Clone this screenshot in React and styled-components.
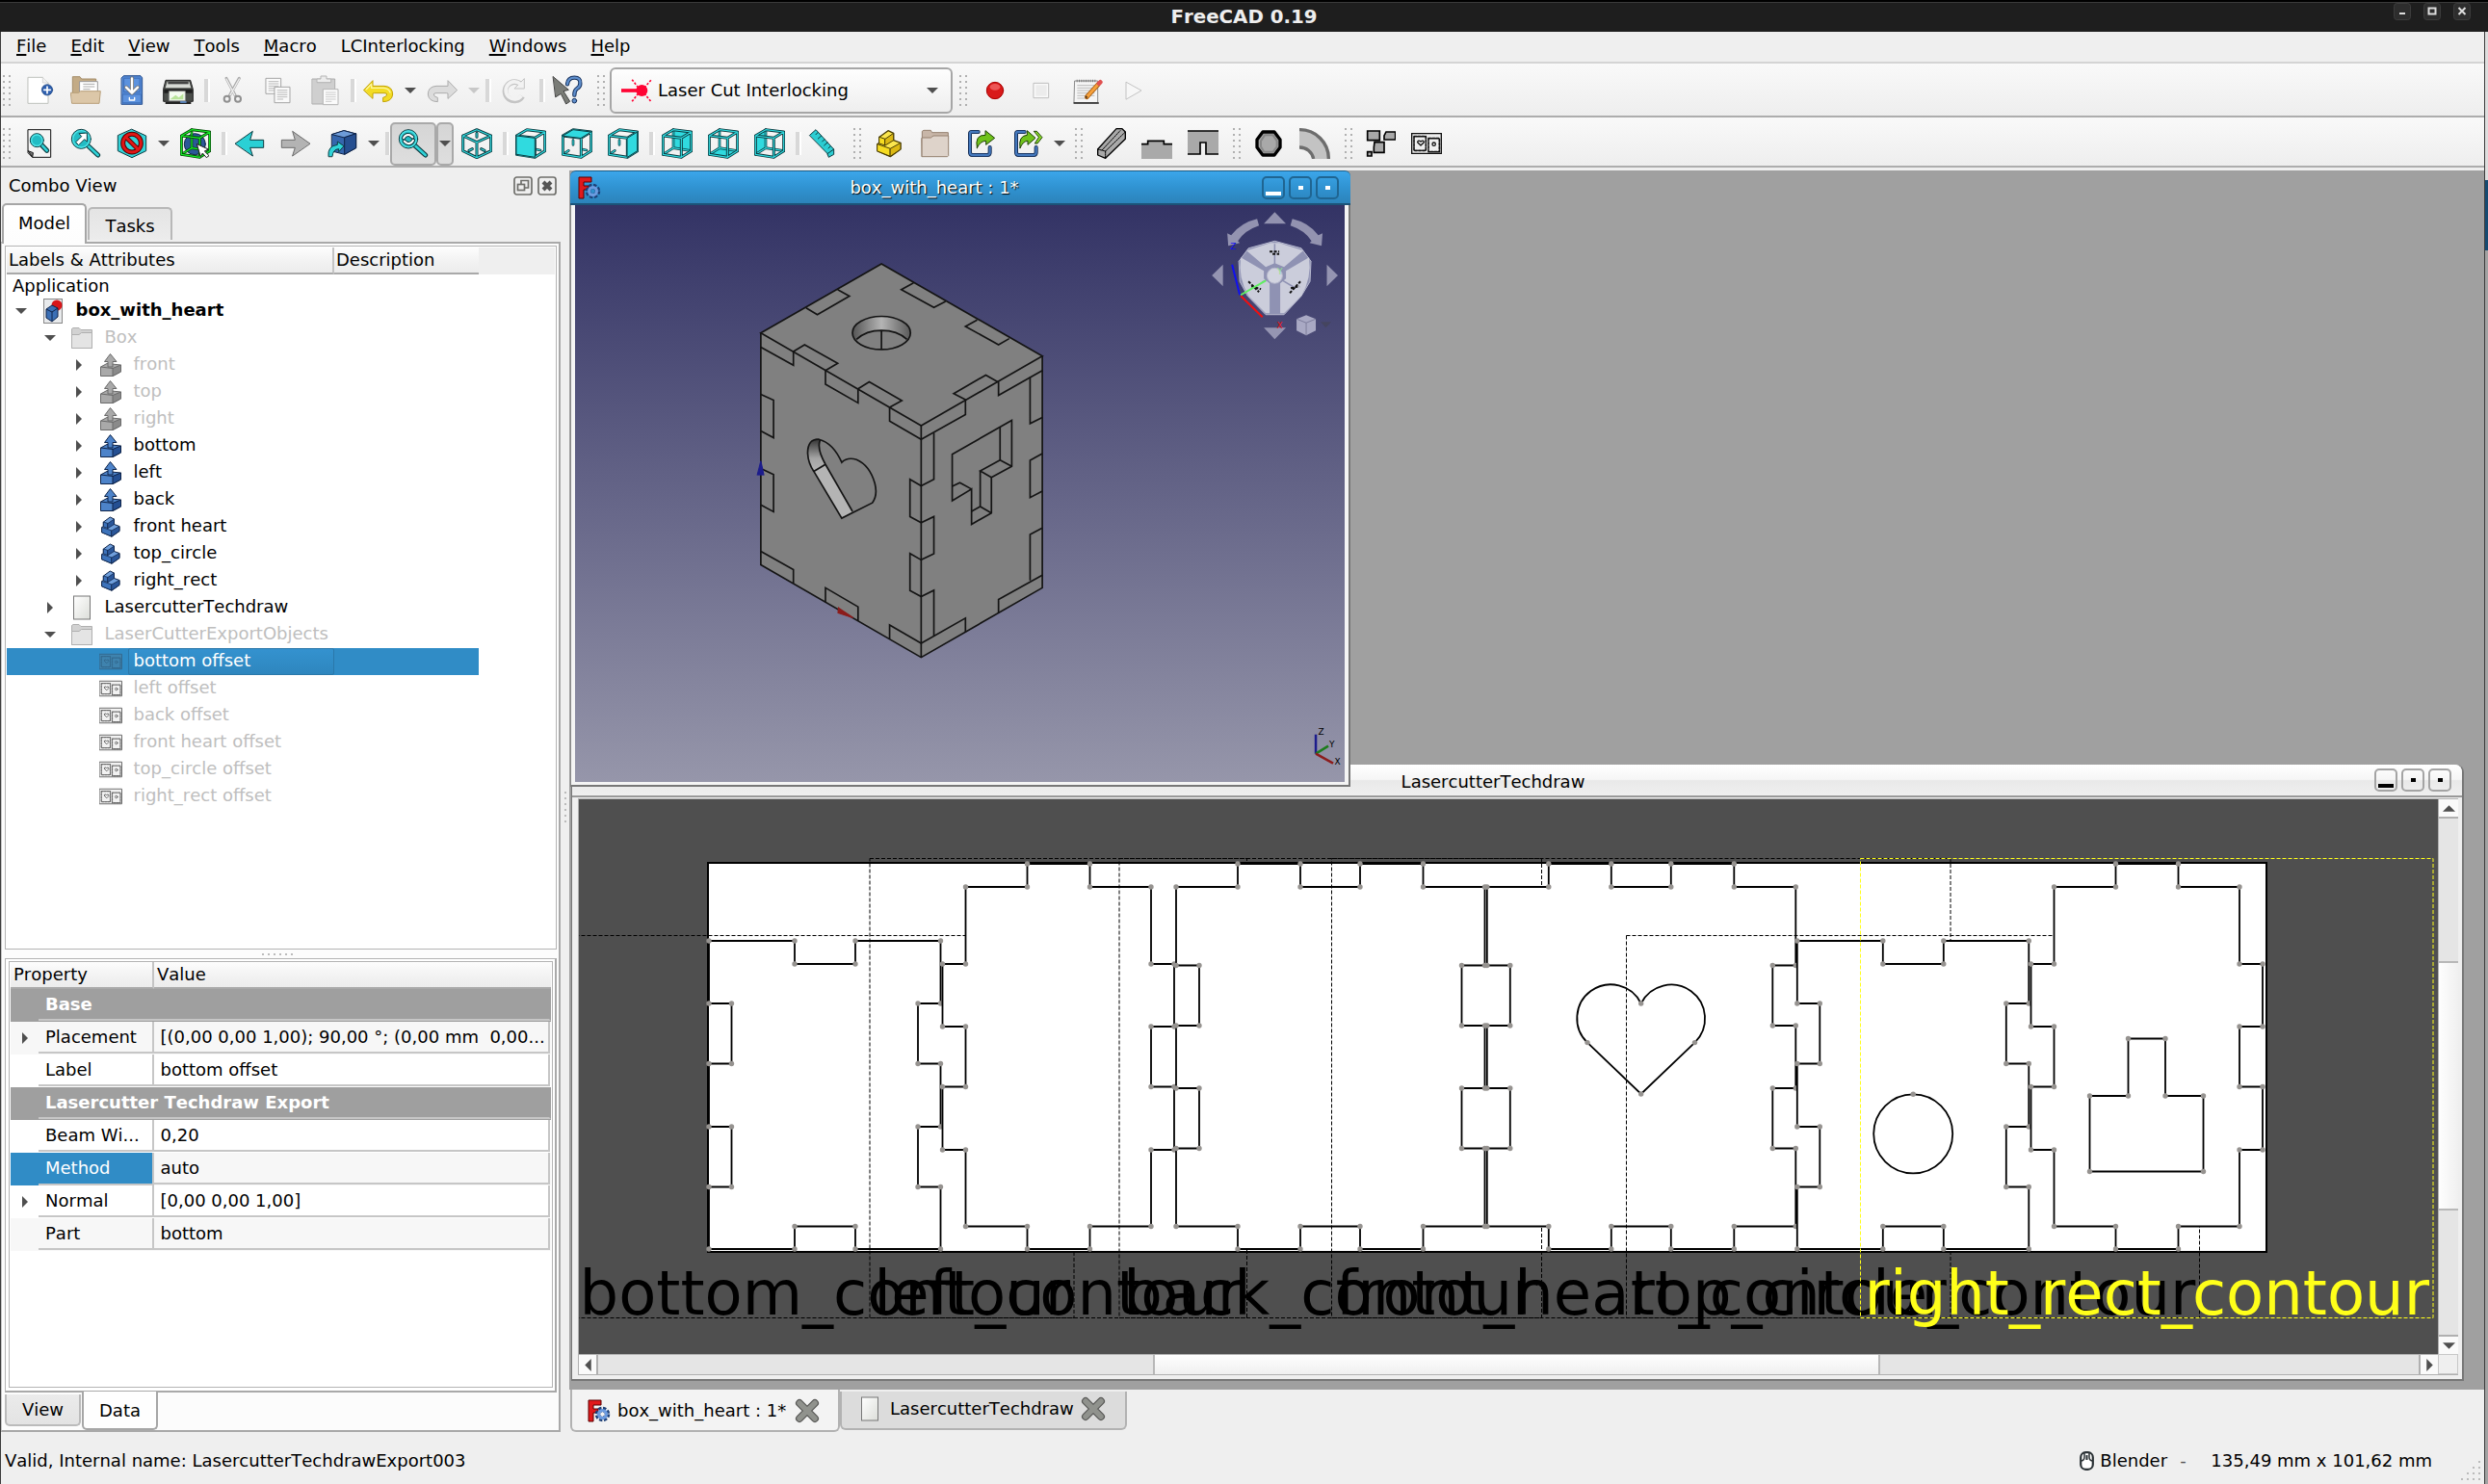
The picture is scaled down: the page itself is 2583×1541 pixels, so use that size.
import React from 'react';
import styled, { createGlobalStyle, css } from 'styled-components';

const GlobalStyle = createGlobalStyle`
  * { box-sizing: border-box; }
  html, body { margin: 0; padding: 0; }
  body {
    width: 2583px; height: 1541px; overflow: hidden;
    font-family: "DejaVu Sans", sans-serif; font-size: 18px; line-height: 1.2;
    color: #000; background: #efefef; font-kerning: none;
  }
  svg { display: block; flex: none; }
`;

/* ---------- shell ---------- */
const Shell = styled.div`
  width: 2583px; height: 1541px; display: flex; flex-direction: column; background: #efefef;
`;
const TitleBar = styled.header`
  height: 33px; flex: none; position: relative; display: flex; align-items: center; justify-content: center;
  background: #1e1e1e; border-top: 2px solid #000; box-shadow: inset 0 1px 0 #3a3a3a;
  color: #eee; font-weight: bold; font-size: 19.8px;
`;
const TitleText = styled.span`margin-top: 0;`;
const TitleButtons = styled.div`
  position: absolute; right: 18px; top: 1px; display: flex; gap: 13px;
`;
const Frame = styled.div`
  flex: 1; min-height: 0; display: flex; border-left: 1px solid #3c3c3c;
`;
const Content = styled.div`width: 2578px; flex: none; display: flex; flex-direction: column;`;
const EdgeStrip = styled.div`
  flex: 1; display: flex; flex-direction: column; border-left: 1px solid #3c3c3c; background: #a2a2a2;
`;
const EdgeBlock = styled.div`
  height: ${p => p.$h}px; background: ${p => p.$c};
`;

const MenuBar = styled.nav`
  height: 33px; flex: none; display: flex; padding: 0 0 2px 3.5px; border-bottom: 2px solid #d4d4d4; align-items: center;
`;
const MenuItem = styled.span`
  padding: 0 12.5px; 
  &::first-letter {
    text-decoration: ${p => (p.$mnemonic ? 'underline' : 'none')};
    text-decoration-thickness: 2px; text-underline-offset: 2px;
  }
  display: block;
`;
const ToolRow = styled.div`
  height: ${p => p.$h}px; flex: none; display: flex; align-items: center; padding-top: ${p => p.$top}px;
  background: linear-gradient(#f9f9f9, #eeeeee); border-bottom: 2px solid #adadad;
`;
const ToolGrip = styled.span`
  width: ${p => p.$w || 20}px; height: 34px; flex: none; padding-left: ${p => (p.$w ? 1 : 6)}px;
  &::before {
    content: ""; display: block; width: 10px; height: 34px;
    background: radial-gradient(circle at 2px 2px, #b0b0b0 1.2px, transparent 1.5px) 0 0 / 6px 6px;
  }
`;
const ToolButton = styled.span`
  width: 48px; height: 45px; flex: none; display: flex; align-items: center; justify-content: center;
  ${p => p.$active && css`
    background: linear-gradient(#d5d5d5, #dedede); border: 2px solid #a9a9a9; border-radius: 5px;
  `}
`;
const DropButton = styled.span`
  width: 18px; height: 45px; flex: none; display: flex; align-items: center; justify-content: center;
  ${p => p.$active && css`
    background: linear-gradient(#d5d5d5, #dedede); border: 2px solid #a9a9a9; border-radius: 5px;
  `}
`;
const ToolSep = styled.span`
  width: 8px; height: 24px; flex: none; 
  &::before { content: ""; display: block; margin-left: 3px; width: 4px; height: 24px; background: #d8d8d8; border-right: 2px solid #fff; }
`;
const Combo = styled.div`
  width: 356px; height: 48px; flex: none; display: flex; align-items: center; padding: 0 13px 0 10px;
  border: 2px solid #a6a6a6; border-radius: 6px; background: linear-gradient(#fefefe, #eeeeee);
`;
const ComboText = styled.span`flex: 1; padding-left: 6px;`;

/* ---------- dock ---------- */
const Main = styled.div`flex: 1; min-height: 0; display: flex;`;
const Dock = styled.aside`width: 581px; flex: none; display: flex; flex-direction: column; height: 1313px;`;
const DockTitle = styled.div`
  height: 37px; flex: none; display: flex; align-items: center; padding: 1px 4px 0 8px; gap: 5px;
`;
const DockName = styled.span`flex: 1;`;
const TabsTop = styled.div`height: 40px; flex: none; display: flex; align-items: flex-end; gap: 1px; padding-left: 1px;`;
const TopTab = styled.div`
  display: flex; align-items: center; justify-content: center;
  border: 2px solid ${p => (p.$on ? '#a6a6a6' : '#b8b8b8')}; border-bottom: 0; border-radius: 5px 5px 0 0;
  width: 88px; height: ${p => (p.$on ? 42 : 34)}px; 
  margin-bottom: ${p => (p.$on ? -2 : 2)}px; padding-top: ${p => (p.$on ? 0 : 3)}px; padding-bottom: ${p => (p.$on ? 2 : 0)}px;
  background: ${p => (p.$on ? 'linear-gradient(#fff, #fdfdfd)' : 'linear-gradient(#e4e4e4, #ececec)')};
  position: relative;
`;
const Pane = styled.div`
  flex: 1; min-height: 0; display: flex; flex-direction: column; background: #fcfcfc;
  border: 2px solid #a9a9a9; border-left: 1px solid #c4c4c4; padding: 2px 2px 0 3px;
`;
const TreeFrame = styled.div`
  height: 731px; flex: none; border: 1px solid #b4b4b4; background: #fff; padding: 1px;
`;
const HeaderRow = styled.div`display: flex; height: ${p => p.$h}px; background: #efefef;`;
const HeaderCell = styled.div`
  width: ${p => p.$w}px; flex: ${p => (p.$grow ? 1 : 'none')}; display: flex; align-items: center; padding-left: ${p => p.$pad}px;
  background: linear-gradient(#fdfdfd, #f4f4f4 45%, #ececec); border-bottom: 2px solid #a9a9a9;
  border-right: ${p => (p.$last ? 0 : 2)}px solid #c4c4c4;
`;
const AppRow = styled.div`height: 24px; display: flex; align-items: center; padding-left: 6px;`;
const TreeRow = styled.div`
  height: 28px; width: 490px; display: flex; align-items: center; padding-left: ${p => p.$level * 30}px;
  color: ${p => (p.$sel ? '#fff' : p.$dim ? '#bebebe' : '#000')};
  font-weight: ${p => (p.$bold ? 'bold' : 'normal')};
  background: ${p => (p.$sel ? '#308cc6' : 'transparent')};
`;
const Expander = styled.span`
  width: 30px; flex: none; display: flex; justify-content: center; margin-right: 6px;
`;
const TreeLabel = styled.span`
  margin-left: 6px; padding-left: 5.5px; height: 28px; line-height: 26px; white-space: nowrap;
  ${p => p.$sel && css`width: 214px; border: 1px solid #2a78aa; border-radius: 2px; line-height: 24px; padding-left: 4.5px; background: linear-gradient(#3492cf, #2e86be);`}
`;
const DotBar = styled.div`
  height: 9px; flex: none; display: flex; justify-content: center; align-items: center; gap: 4px; padding-right: 8px;
`;
const Dot = styled.i`width: 2px; height: 2px; background: #bbb;`;
const PropOuter = styled.div`
  height: 451px; flex: none; border: 1px solid #b4b4b4; border-right: 2px solid #a9a9a9; border-bottom: 2px solid #a9a9a9;
  background: #fff; padding: 2px 2px 3px 3px;
`;
const PropInner = styled.div`height: 100%; border: 1px solid #b4b4b4; padding: 0 1px 1px;`;
const PropRow = styled.div`
  height: 34px; display: flex; position: relative;
  background: ${p => (p.$group ? '#9f9f9f' : p.$alt ? '#f7f7f7' : '#fff')};
  color: ${p => (p.$group ? '#fff' : '#000')}; font-weight: ${p => (p.$group ? 'bold' : 'normal')};
`;
const PropGutter = styled.div`
  width: 29px; flex: none; display: flex; align-items: center; justify-content: center;
  background: ${p => (p.$sel ? '#308cc6' : 'transparent')};
`;
const PropName = styled.div`
  width: ${p => (p.$wide ? 'auto' : '120px')}; flex: ${p => (p.$wide ? 1 : 'none')}; 
  padding-left: 7px; line-height: 31px; white-space: pre; height: ${p => (p.$sel ? 34 : 33)}px;
  border-bottom: 2px solid #c6c6c6; border-right: 2px solid ${p => (p.$wide ? '#9f9f9f' : '#c6c6c6')};
  color: ${p => (p.$sel ? '#fff' : 'inherit')}; background: ${p => (p.$sel ? '#308cc6' : 'transparent')};
`;
const PropValue = styled.div`
  flex: 1; padding-left: 6.5px; line-height: 31px; white-space: pre; overflow: hidden; height: 33px;
  border-bottom: 2px solid #c6c6c6; border-right: 2px solid #c6c6c6; margin-right: 1px;
`;
const TabsBottom = styled.div`display: flex; align-items: flex-start; gap: 1px;`;
const BottomTab = styled.div`
  display: flex; align-items: center; justify-content: center; position: relative;
  border: 2px solid ${p => (p.$on ? '#a6a6a6' : '#bbb')}; border-top: 0; border-radius: 0 0 5px 5px;
  width: 79px; height: ${p => (p.$on ? 40 : 33)}px; margin-top: ${p => (p.$on ? -1 : 2)}px; padding-top: ${p => (p.$on ? 1 : 0)}px;
  background: ${p => (p.$on ? '#fefefe' : 'linear-gradient(#ebebeb, #e3e3e3)')};
`;
const Splitter = styled.div`
  width: 9px; flex: none; height: 1313px; display: flex; flex-direction: column; justify-content: center; align-items: center; gap: 4px; padding-top: 14px;
`;

/* ---------- mdi ---------- */
const Center = styled.div`flex: 1; min-width: 0; display: flex; flex-direction: column; padding-top: 3px;`;
const MdiArea = styled.div`height: 1266px; flex: none; position: relative; background: #a0a0a0; overflow: hidden;`;
const BoxWindow = styled.section`
  position: absolute; left: 1px; top: 0; width: 810px; height: 640px; display: flex; flex-direction: column;
`;
const BoxTitle = styled.div`
  height: 36px; flex: none; display: flex; align-items: center; padding: 0 12px 0 8px; 
  background: linear-gradient(#3ba6ea, #3093d2 50%, #2c83ba); border-top: 1px solid #1d5c85; border-bottom: 2px solid #1b5378;
  border-radius: 6px 6px 0 0; color: #fff; text-shadow: 1px 1px 1px #000;
`;
const WinName = styled.span`flex: 1; text-align: center; padding-left: ${p => p.$shift || 0}px; padding-top: ${p => p.$drop || 0}px;`;
const WinButtons = styled.div`display: flex; gap: 4px;`;
const WinButton = styled.span`
  width: 24px; height: 24px; border-radius: 5px; display: flex; justify-content: center; align-items: ${p => (p.$min ? 'flex-end' : 'center')};
  border: 2px solid ${p => (p.$blue ? '#1f6592' : '#a4a4a4')}; padding-bottom: ${p => (p.$min ? 2 : 0)}px;
  &::before { content: ""; width: ${p => (p.$min ? 16 : 5)}px; height: 4px; background: ${p => (p.$blue ? '#fff' : '#000')}; }
`;
const BoxBody = styled.div`
  flex: 1; display: flex; background: #f4f4f4; padding: 0 4px 3px 4px;
  border-left: 1px solid #888; border-right: 2px solid #777; border-bottom: 2px solid #777;
`;
const Viewport = styled.div`
  flex: 1; position: relative; background: linear-gradient(#333365, #9696aa);
`;
const SceneSvg = styled.svg`position: absolute; left: 0; top: 0; width: 100%; height: 100%;`;

const DrawWindow = styled.section`
  position: absolute; left: 2px; top: 617px; width: 1965px; height: 640px; display: flex; flex-direction: column;
  background: #efefef; border-left: 1px solid #777; border-right: 2px solid #777; border-bottom: 2px solid #777; border-radius: 0 8px 0 0;
`;
const DrawTitle = styled.div`
  height: 34px; flex: none; display: flex; align-items: center; padding: 0 11px 0 0;
  background: linear-gradient(#fff, #f6f6f6 48%, #e9e9e9 52%, #efefef); border-bottom: 2px solid #999; border-radius: 0 8px 0 0;
`;
const DrawBody = styled.div`
  margin: 1px 4px 4px 6px; flex: 1; display: grid; grid-template: 576px 21px / 1930px 21px; border: 1px solid #b0b0b0;
`;
const Canvas = styled.div`background: #4f4f4f; overflow: hidden;`;
const VScroll = styled.div`display: flex; flex-direction: column; background: #e5e5e5; border-left: 1px solid #b0b0b0;`;
const HScroll = styled.div`display: flex; background: #e5e5e5; border-top: 1px solid #b0b0b0;`;
const ScrollArrow = styled.span`
  flex: none; width: 20px; height: 20px; display: flex; align-items: center; justify-content: center; background: #fafafa;
  border: 0 solid #b0b0b0; 
  border-width: ${p => p.$edge};
`;
const ScrollGap = styled.span`flex: none; ${p => (p.$v ? 'height' : 'width')}: ${p => p.$s}px;`;
const ScrollThumb = styled.span`
  flex: none; background: ${p => (p.$v ? 'linear-gradient(90deg, #fefefe, #f0f0f0)' : 'linear-gradient(#fefefe, #f0f0f0)')};
  ${p => (p.$v ? css`height: ${p.$s}px; border: 2px solid #b8b8b8; border-width: 2px 0;` : css`width: ${p.$s}px; border: 2px solid #b8b8b8; border-width: 0 2px;`)}
`;
const Corner = styled.div`background: #efefef; border: 1px solid #c8c8c8;`;

const DocTabs = styled.div`height: 44px; flex: none; display: flex; align-items: flex-start; padding-left: 1px;`;
const DocTab = styled.div`
  display: flex; align-items: center; 
  width: ${p => p.$w}px; height: ${p => (p.$on ? 44 : 40)}px; margin-top: ${p => (p.$on ? 0 : 2)}px;
  padding: ${p => (p.$on ? '2px 19px 0 16px' : '0 20px 2px 17px')};
  border: 2px solid #b2b2b2; border-top: 0; border-radius: 0 0 6px 6px;
  background: ${p => (p.$on ? '#f3f3f3' : '#dcdcdc')};
`;
const DocName = styled.span`flex: 1; padding-left: ${p => p.$pad}px; white-space: nowrap;`;

const StatusBar = styled.footer`
  height: 52px; flex: none; display: flex; align-items: center; padding: 3px 0 0 4px; position: relative;
`;
const StatusText = styled.span`flex: 1;`;
const StatusRight = styled.div`display: flex; align-items: center; padding-right: 54px;`;
const NavStyle = styled.span`margin-left: 6px; width: 83px;`;
const Dash = styled.span`width: 32px; color: #555;`;
const SizeGrip = styled.svg`position: absolute; right: 2px; bottom: 2px;`;

/* ---------- icon pieces ---------- */
const K = '#0b3b40';
const Ico = ({ children, s = 32 }) => (
  <svg width={s} height={s} viewBox="0 0 96 96" strokeLinejoin="round" strokeLinecap="round" fill="none">{children}</svg>
);
const Caret = ({ c = '#4f4f4f', d = 'down', s = 12 }) => {
  const pts = { down: '0,3 12,3 6,9', up: '0,9 12,9 6,3', right: '3,0 9,6 3,12', left: '9,0 3,6 9,12' }[d];
  return <svg width={s} height={s} viewBox="0 0 12 12"><polygon points={pts} fill={c} /></svg>;
};
const Lines = ({ x, y, w, n, gap = 8, c = '#aaa' }) => (
  <path d={Array.from({ length: n }, (_, i) => `M${x} ${y + i * gap}h${i === n - 1 ? w * 0.6 : w}`).join('')} stroke={c} strokeWidth="3" strokeLinecap="butt" />
);

const NewIcon = () => <Ico><path d="M13 7H58L75 24V88H13Z" fill="#fff" stroke="#bfc2bd" strokeWidth="3" /><path d="M58 7V24H75" fill="#f2f2f2" stroke="#c9c9c9" strokeWidth="2" /><circle cx="72" cy="46" r="17" fill="#2e5fae" stroke="#20457f" strokeWidth="2" /><path d="M72 36V56M62 46H82" stroke="#fff" strokeWidth="5" /></Ico>;
const OpenIcon = () => <Ico><path d="M7 58V5H30L35 12H80V58Z" fill="#c3ab86" stroke="#a48d68" strokeWidth="3" /><path d="M30 20H85V62H30Z" fill="#fff" stroke="#999" strokeWidth="3" /><Lines x={40} y={28} w={36} n={3} /><path d="M2 55H26L32 50H94L90 88H6Z" fill="#dcc7a8" stroke="#b89f79" strokeWidth="3" /></Ico>;
const SaveIcon = () => <Ico><path d="M16 8L22 2H75L80 8V91H16Z" fill="#5085d1" stroke="#274f8f" strokeWidth="3" /><path d="M20 60H76V86H20ZM24 10H72V52H24Z" fill="#5c92de" stroke="#3565ad" strokeWidth="2" /><path d="M40 70V78H56V70" stroke="#fff" strokeWidth="4" /><path d="M48 10V48M30 38L48 56L66 38" stroke="#777" strokeWidth="12" /><path d="M48 10V48M30 38L48 56L66 38" stroke="#fff" strokeWidth="7" /></Ico>;
const PrintIcon = () => <Ico><path d="M10 16H86L94 44V82H2V44Z" fill="#4a4d4a" stroke="#222" strokeWidth="3" /><path d="M14 20H82L88 40H8Z" fill="#d7dad5" /><path d="M16 20H80V28H16Z" fill="#444" /><path d="M4 44H92V56H4Z" fill="#1d1d1d" /><path d="M20 50H70V80H20Z" fill="#f4fbef" stroke="#999" strokeWidth="2" /><path d="M24 74L40 62L50 70L64 58V76H24Z" fill="#b9e39a" /><path d="M8 84H88V90H8Z" fill="#222" /><path d="M56 84H72" stroke="#69d" strokeWidth="5" /></Ico>;
const CutIcon = () => <Ico><path d="M30 10L58 64M70 10L40 64" stroke="#a9a9a9" strokeWidth="9" /><path d="M30 12L56 62M70 12L42 62" stroke="#eee" strokeWidth="4" /><circle cx="32" cy="74" r="9" stroke="#8f8f8f" strokeWidth="6" /><circle cx="66" cy="74" r="9" stroke="#8f8f8f" strokeWidth="6" /></Ico>;
const CopyIcon = () => <Ico><path d="M10 10H56V58H10Z" fill="#fafafa" stroke="#a5a5a5" strokeWidth="3" /><Lines x={17} y={20} w={32} n={5} gap={7} c="#bbb" /><path d="M37 37H84V86H37Z" fill="#fafafa" stroke="#a5a5a5" strokeWidth="3" /><Lines x={44} y={47} w={32} n={5} gap={7} c="#bbb" /></Ico>;
const PasteIcon = () => <Ico><path d="M10 12H80V90H10Z" fill="#cfcfcf" stroke="#adadad" strokeWidth="3" /><path d="M24 22V12H36V3H54V12H68V22Z" fill="#ececec" stroke="#b5b5b5" strokeWidth="3" /><path d="M44 44H90V92H44Z" fill="#fbfbfb" stroke="#b5b5b5" strokeWidth="3" /><Lines x={51} y={54} w={32} n={5} gap={7} c="#ccc" /></Ico>;
const arrowD = 'M2 46L30 17V34H66Q92 36 92 60Q90 82 62 83V70Q74 68 74 60Q74 56 66 56H34L30 57V72Z';
const UndoIcon = () => <Ico><path d={arrowD} fill="#f3dc24" stroke="#c2a203" strokeWidth="3" /><path d="M10 44L26 28V40H64Q80 41 84 54" stroke="#fdf6a0" strokeWidth="4" /></Ico>;
const RedoIcon = () => <Ico><path d={arrowD} transform="matrix(-1 0 0 1 96 0)" fill="#dcdcdc" stroke="#ababab" strokeWidth="3" /></Ico>;
const RefreshIcon = () => <Ico><path d="M72 30A29 29 0 1 0 76 66" stroke="#c4c4c4" strokeWidth="17" strokeLinecap="butt" /><path d="M82 12V42H52Z" fill="#f2f2f2" stroke="#c4c4c4" strokeWidth="3" /><path d="M70 28A27 27 0 1 0 73 64" stroke="#f2f2f2" strokeWidth="11" strokeLinecap="butt" /></Ico>;
const HelpIcon = () => <Ico><path d="M48 28Q50 8 70 8Q90 8 88 26Q88 36 78 42Q70 47 70 62" stroke="#16305b" strokeWidth="13" /><path d="M48 28Q50 8 70 8Q90 8 88 26Q88 36 78 42Q70 47 70 62" stroke="#5f8fcd" strokeWidth="7" /><circle cx="70" cy="80" r="7" fill="#5f8fcd" stroke="#16305b" strokeWidth="3" /><path d="M4 5L52 46L36 50L56 82L44 90L28 58L12 68Z" fill="#7a7c77" stroke="#444" strokeWidth="3" /></Ico>;
const LaserIcon = () => <Ico><path d="M0 48H50" stroke="#ff0434" strokeWidth="11" strokeLinecap="butt" /><circle cx="64" cy="48" r="18" fill="#ff0434" /><path d="M64 48L94 14M64 48L94 84M60 48L32 12M60 48L32 84" stroke="#ff0434" strokeWidth="5" strokeDasharray="7 5" strokeLinecap="butt" /></Ico>;
const RecordIcon = () => <Ico><circle cx="48" cy="48" r="26" fill="#d91a1a" stroke="#a80000" strokeWidth="3" /><ellipse cx="48" cy="37" rx="16" ry="10" fill="#f37070" opacity="0.7" /></Ico>;
const StopIcon = () => <Ico><path d="M25 25H71V71H25Z" fill="#fafafa" stroke="#bfbfbf" strokeWidth="3" strokeLinejoin="miter" /><path d="M31 31H65V65H31Z" fill="#ececec" /></Ico>;
const EditIcon = () => <Ico><path d="M9 18H80V86H7Z" fill="#f5f5f5" stroke="#8c8c8c" strokeWidth="3" /><path d="M6 87H82" stroke="#222" strokeWidth="4" /><path d="M14 18H76" stroke="#777" strokeWidth="8" strokeDasharray="3 4" strokeLinecap="butt" /><Lines x={16} y={32} w={54} n={6} gap={8} c="#bbb" /><path d="M46 68L82 28" stroke="#a85d10" strokeWidth="14" /><path d="M48 66L80 30" stroke="#f6a13c" strokeWidth="9" /><path d="M84 26L88 22" stroke="#e05050" strokeWidth="14" /><path d="M42 72L48 68L44 64Z" fill="#222" /></Ico>;
const PlayIcon = () => <Ico><path d="M25 22L72 48L25 75Z" fill="#f7f7f7" stroke="#c4c4c4" strokeWidth="3" /></Ico>;

const Glass = ({ cx, cy, r, hx, hy }) => {
  const a = r * 0.72;
  return <><path d={`M${cx + a} ${cy + a}L${hx} ${hy}`} stroke={K} strokeWidth="15" /><path d={`M${cx + a} ${cy + a}L${hx} ${hy}`} stroke="#2fd3d8" strokeWidth="8" /><circle cx={cx} cy={cy} r={r} fill="#22bcc4" stroke={K} strokeWidth="3" /><circle cx={cx} cy={cy} r={r - 4} stroke="#4fe3e6" strokeWidth="4" /></>;
};
const FitAllIcon = () => <Ico><path d="M13 5H83V91H26L13 78Z" fill="#f4f4f4" stroke="#111" strokeWidth="3" /><path d="M13 72L26 91L28 78Z" fill="#777" stroke="#111" strokeWidth="3" /><Glass cx={40} cy={38} r={21} hx={71} hy={70} /></Ico>;
const FitSelIcon = () => <Ico><Glass cx={34} cy={34} r={30} hx={86} hy={84} /><path d="M52 16V42L44 35L26 53L17 44L35 26L28 18Z" fill="#fff" stroke={K} strokeWidth="3" /></Ico>;
const DrawStyleIcon = () => <Ico><path d="M48 4L92 24V71L48 92L4 71V24Z" fill="#33d3d8" stroke={K} strokeWidth="3" /><circle cx="48" cy="47" r="28" stroke="#4c0000" strokeWidth="15" /><path d="M28 27L68 67" stroke="#4c0000" strokeWidth="14" /><circle cx="48" cy="47" r="28" stroke="#df1616" strokeWidth="9" /><path d="M28 27L68 67" stroke="#df1616" strokeWidth="9" /></Ico>;
const Cube = ({ c, k, face }) => {
  const F = { front: '4,24 61,31 61,91 4,82', top: '4,24 36,5 92,12 61,31', right: '61,31 92,12 92,71 61,91', back: '36,5 92,12 92,71 36,62', bottom: '4,82 36,62 92,71 61,91', left: '4,24 36,5 36,62 4,82' };
  const wire = 'M4 24L61 31V91L4 82ZM4 24L36 5L92 12L61 31M92 12V71L61 91';
  const hidden = 'M36 5V62L92 71M36 62L4 82';
  const solid = face === 'front' || face === 'top' || face === 'right';
  const short = 'M36 38V52M22 70L12 77M64 66L78 69';
  return <>
    {face && <polygon points={F[face]} fill={c} />}
    <path d={solid ? short : hidden} stroke={k} strokeWidth="8" /><path d={solid ? short : hidden} stroke={c} strokeWidth="3.5" />
    <path d={wire} stroke={k} strokeWidth="9" /><path d={wire} stroke={c} strokeWidth="3.5" />
    {face && solid && <polygon points={F[face]} fill={c} stroke={k} strokeWidth="3" />}
  </>;
};
const CubeIcon = ({ face }) => <Ico><Cube c="#30dadf" k={K} face={face} /></Ico>;
const BoundIcon = () => <Ico><circle cx="46" cy="50" r="33" fill="#2c5798" stroke="#10254a" strokeWidth="3" /><Cube c="#17f028" k="#064a08" /><path d="M53 50L88 66L76 72L90 86L82 92L70 78L64 88Z" fill="#fff" stroke="#222" strokeWidth="3" /></Ico>;
const BackIcon = () => <Ico><path d="M4 48L58 10L50 37H92V61H50L58 86Z" fill="#2ad0d5" stroke={K} strokeWidth="3" /></Ico>;
const FwdIcon = () => <Ico><path d="M92 48L38 10L46 37H4V61H46L38 86Z" fill="#b3b3b3" stroke="#6b6b6b" strokeWidth="3" /></Ico>;
const ViewLinkIcon = () => <Ico><path d="M17 20L55 8L92 18V62L56 82L17 72Z" fill="#3566ad" stroke="#0e2348" strokeWidth="3" /><path d="M17 20L56 30L92 18L55 8Z" fill="#6d9bd8" stroke="#0e2348" strokeWidth="3" /><path d="M56 30V82L92 62V18Z" fill="#264f90" stroke="#0e2348" strokeWidth="3" /><path d="M6 88Q2 56 34 52V42L54 56L38 74V65Q20 66 18 88Z" fill="#2fd3d8" stroke={K} strokeWidth="3" /></Ico>;
const SyncIcon = () => <Ico><Glass cx={33} cy={34} r={29} hx={86} hy={84} /><path d="M18 31Q24 18 38 22L46 28M48 38Q42 52 28 47L20 41" stroke={K} strokeWidth="12" /><path d="M18 31Q24 18 38 22L46 28M48 38Q42 52 28 47L20 41" stroke="#fff" strokeWidth="6" /></Ico>;
const isoD = 'M48 5L92 24V71L48 92L5 71V24ZM5 24L48 44L92 24M48 44V92M48 16V28M24 70L34 65M72 70L62 65';
const IsoIcon = () => <Ico><path d={isoD} stroke={K} strokeWidth="9" /><path d={isoD} stroke="#30dadf" strokeWidth="3.5" /></Ico>;
const RulerIcon = () => <Ico><path d="M5 22L24 5L80 66V82L64 91L60 80Z" fill="#2ccdd2" stroke={K} strokeWidth="3" /><path d="M60 80L80 66" stroke={K} strokeWidth="3" /><path d="M31 13L24 20M41 24L31 33M51 35L44 42M60 45L50 54M70 56L63 63" stroke={K} strokeWidth="3" /></Ico>;
const Part = ({ a, b, c, k }) => <>
  <path d="M12 50L18 46V28L45 8L62 16V38L84 46V66L52 89L12 72Z" fill={a} stroke={k} strokeWidth="4" />
  <path d="M12 50L52 64V88L12 72Z" fill={b} stroke={k} strokeWidth="3" />
  <path d="M52 64L84 46V66L52 88Z" fill={c} stroke={k} strokeWidth="3" />
  <path d="M18 28L36 34V54L18 48Z" fill={b} stroke={k} strokeWidth="3" />
  <path d="M36 34L62 16V38L36 54Z" fill={c} stroke={k} strokeWidth="3" />
</>;
const PartIcon = () => <Ico><Part a="#fbe64e" b="#f6dc22" c="#dcb913" k="#4a3d02" /></Ico>;
const GroupIcon = () => <Ico><path d="M7 88V10L12 7H34L38 14H88V34H7Z" fill="#c8b6a8" stroke="#95806f" strokeWidth="3" /><path d="M7 30H34L42 24H89V86L86 89H7Z" fill="#ded3ca" stroke="#95806f" strokeWidth="3" /></Ico>;
const LinkBase = () => <><path d="M38 12H18Q12 12 12 18V76Q12 84 20 84H66Q74 84 74 76V60" stroke="#0e2348" strokeWidth="12" /><path d="M38 12H18Q12 12 12 18V76Q12 84 20 84H66Q74 84 74 76V60" stroke="#4478bd" strokeWidth="7" /></>;
const LinkIcon = () => <Ico><LinkBase /><path d="M34 62Q26 20 60 22V8L89 31L62 52V40Q44 40 34 62Z" fill="#6fc21b" stroke="#1d3f04" strokeWidth="3" /></Ico>;
const LinksIcon = () => <Ico><LinkBase /><path d="M24 62Q18 24 46 22V8L72 31L48 52V40Q34 40 24 62Z" fill="#6fc21b" stroke="#1d3f04" strokeWidth="3" /><path d="M68 10H76L93 29L78 48H70L82 29Z" fill="#8bdc2a" stroke="#1d3f04" strokeWidth="3" /></Ico>;
const BeamIcon = () => <Ico><path d="M8 66L66 2H84L94 12V34L32 94L8 84Z" fill="#a9a9a9" stroke="#000" strokeWidth="4" /><path d="M8 66L32 72L94 12M32 72V94M22 68L78 8" stroke="#000" strokeWidth="3" strokeDasharray="5 3" /></Ico>;
const TabIcon = () => <Ico><path d="M0 50H20V40H70V50H96V96H0Z" fill="#a9a9a9" /><path d="M0 50H20V40H70V50H96" stroke="#000" strokeWidth="5" strokeLinejoin="miter" strokeLinecap="butt" /></Ico>;
const SlotIcon = () => <Ico><path d="M0 9H96V81H57V45H39V81H0Z" fill="#a9a9a9" /><path d="M0 9H96M0 81H39V45H57V81H96" stroke="#000" strokeWidth="5" strokeLinejoin="miter" strokeLinecap="butt" /></Ico>;
const HexIcon = () => <Ico><path d="M30 12H66L84 36V60L66 84H30L12 60V36Z" fill="#a9a9a9" stroke="#000" strokeWidth="10" /><path d="M36 22H62L74 40V58L62 74H34L24 58V40Z" stroke="#888" strokeWidth="6" /></Ico>;
const BendIcon = () => <Ico><path d="M0 0A94 94 0 0 1 96 96H48A48 48 0 0 0 0 60Z" fill="#c3c3c3" /><path d="M0 5A90 90 0 0 1 91 96M0 60A44 44 0 0 1 44 96" stroke="#6d6d6d" strokeWidth="10" strokeLinecap="butt" /></Ico>;
const CrossIcon = () => <Ico><path d="M8 9H46V38H8ZM66 12H95V36H60V24ZM30 44H60V76H28V60ZM8 74H21V87H8Z" fill="#a9a9a9" stroke="#000" strokeWidth="5" strokeLinejoin="miter" /></Ico>;
const Export = ({ c, bg, s }) => <Ico s={s}><path d="M2 17H94V79H2Z" fill={bg} stroke={c} strokeWidth="4" strokeLinejoin="miter" /><path d="M9 26H46V70H9ZM54 32H88V74H54Z" stroke={c} strokeWidth="5" strokeDasharray="8 4" /><path d="M30 54L20 44Q22 36 30 42Q38 36 40 44Z" stroke={c} strokeWidth="4" /><circle cx="71" cy="50" r="5" stroke={c} strokeWidth="4" /></Ico>;
const ExportIcon = () => <Export c="#111" bg="#eee" />;

/* tree icons */
const DocIcon = () => <svg width="24" height="28" viewBox="0 0 24 28"><rect x="2.5" y="1.5" width="19" height="25" fill="#e8eaec" stroke="#888" /><circle cx="16" cy="8" r="5.5" fill="#d8151a" /><path d="M5 12L11 8L17 11V20L11 25L5 21Z" fill="#3b6fb5" stroke="#0e2348" /><path d="M5 12L11 15L17 11M11 15V25" fill="none" stroke="#0e2348" /></svg>;
const FolderIcon = () => <svg width="24" height="24" viewBox="0 0 24 24"><path d="M1.5 22.500V2.500L3 1.500H9L11 3.500H22.500V22.500Z" fill="#d2d2d2" stroke="#b0b0b0" /><path d="M1.500 8.500H9L11.500 6.500H22.500V22.500H1.500Z" fill="#e4e4e4" stroke="#b0b0b0" /></svg>;
const PadIcon = ({ dim }) => {
  const [a, b, k] = dim ? ['#a9a9a9', '#8a8a8a', '#6b6b6b'] : ['#4d83c9', '#244f92', '#0e2348'];
  return <svg width="24" height="26" viewBox="0 0 24 26" strokeLinejoin="round"><path d="M1.500 15L8 11.500L22.500 13V20L14 24.500H1.500Z" fill={a} stroke={k} /><path d="M14 16.500L22.500 13V20L14 24.500Z" fill={b} stroke={k} /><path d="M1.500 15L14 16.500" stroke={k} /><path d="M9 15V9.500H5.500L11.500 1.500L18 9.500H14V15Z" fill={a} stroke={k} /></svg>;
};
const BodyIcon = () => <Ico s={24}><Part a="#6f9fdc" b="#3d73bb" c="#2a5699" k="#0e2348" /></Ico>;
const PageIcon = () => <svg width="24" height="26" viewBox="0 0 24 26"><defs><linearGradient id="pg" x1="0" y1="0" x2="1" y2="1"><stop offset="0" stopColor="#fff" /><stop offset="1" stopColor="#dcded9" /></linearGradient></defs><rect x="3.500" y="1" width="17" height="24" fill="url(#pg)" stroke="#777" /></svg>;
const FcIcon = ({ s = 24 }) => <svg width={s} height={s} viewBox="0 0 24 24"><path d="M1 1H14V6H6V10H11V14H6V23H1Z" fill="#e0191c" stroke="#5b0000" /><circle cx="15.500" cy="15.500" r="5" fill="none" stroke="#1d3f77" strokeWidth="5.500" strokeDasharray="2.600 1.300" /><circle cx="15.500" cy="15.500" r="4" fill="none" stroke="#6c9be0" strokeWidth="3" /></svg>;
const CloseX = () => <svg width="26" height="26" viewBox="0 0 26 26"><path d="M5 5L21 21M21 5L5 21" stroke="#5a5a58" strokeWidth="8" strokeLinecap="round" /><path d="M5 5L21 21M21 5L5 21" stroke="#90928d" strokeWidth="5.500" strokeLinecap="round" /></svg>;
const DockFloat = () => <svg width="20" height="20" viewBox="0 0 20 20" fill="none" stroke="#6f6f6b" strokeWidth="1.700"><rect x="1" y="1" width="18" height="18" rx="2.500" /><rect x="4.500" y="8.500" width="7" height="6" /><path d="M8 8V4.500H15.500V12H12" /></svg>;
const DockClose = () => <svg width="20" height="20" viewBox="0 0 20 20" fill="none" stroke="#6f6f6b" strokeWidth="1.700"><rect x="1" y="1" width="18" height="18" rx="2.500" /><path d="M6 6L14 14M14 6L6 14" stroke="#555" strokeWidth="4" /></svg>;
const SysBtn = ({ kind }) => <svg width="18" height="18" viewBox="0 0 18 18" fill="none" stroke="#ddd" strokeWidth="2"><rect x="0.500" y="0.500" width="17" height="17" rx="3" fill="#2d2d2d" stroke="#3c3c3c" strokeWidth="1" />{kind === 'min' ? <path d="M6 11H12" /> : kind === 'max' ? <rect x="5.500" y="5.500" width="7" height="6" /> : <path d="M5.500 5L12.500 12M12.500 5L5.500 12" />}</svg>;

/* ---------- data ---------- */
const MENUS = ['File', 'Edit', 'View', 'Tools', 'Macro', 'LCInterlocking', 'Windows', 'Help'];
const TREE = [
  [0, 'down', DocIcon, 'box_with_heart', { bold: true }],
  [1, 'down', FolderIcon, 'Box', { dim: true }],
  [2, 'right', PadIcon, 'front', { dim: true }],
  [2, 'right', PadIcon, 'top', { dim: true }],
  [2, 'right', PadIcon, 'right', { dim: true }],
  [2, 'right', PadIcon, 'bottom', {}],
  [2, 'right', PadIcon, 'left', {}],
  [2, 'right', PadIcon, 'back', {}],
  [2, 'right', BodyIcon, 'front heart', {}],
  [2, 'right', BodyIcon, 'top_circle', {}],
  [2, 'right', BodyIcon, 'right_rect', {}],
  [1, 'right', PageIcon, 'LasercutterTechdraw', {}],
  [1, 'down', FolderIcon, 'LaserCutterExportObjects', { dim: true }],
  [2, null, 'exp', 'bottom offset', { sel: true }],
  [2, null, 'exp', 'left offset', { dim: true }],
  [2, null, 'exp', 'back offset', { dim: true }],
  [2, null, 'exp', 'front heart offset', { dim: true }],
  [2, null, 'exp', 'top_circle offset', { dim: true }],
  [2, null, 'exp', 'right_rect offset', { dim: true }],
];
const PROPS = [
  { group: 'Base' },
  { name: 'Placement', value: '[(0,00 0,00 1,00); 90,00 °; (0,00 mm  0,00...', alt: true, arrow: true },
  { name: 'Label', value: 'bottom offset' },
  { group: 'Lasercutter Techdraw Export' },
  { name: 'Beam Wi...', value: '0,20' },
  { name: 'Method', value: 'auto', alt: true, sel: true },
  { name: 'Normal', value: '[0,00 0,00 1,00]', arrow: true },
  { name: 'Part', value: 'bottom', alt: true },
];

/* drawing outlines, in window coordinates */
const SIDE = [[1002.5, 922], [1066.5, 922], [1066.5, 898], [1131.5, 898], [1131.5, 922], [1195, 922], [1195, 1002], [1219, 1002], [1219, 1067], [1195, 1067], [1195, 1129.5], [1219, 1129.5], [1219, 1195], [1195, 1195], [1195, 1274.5], [1131.5, 1274.5], [1131.5, 1298], [1066.5, 1298], [1066.5, 1274.5], [1002.5, 1274.5], [1002.5, 1195], [978.5, 1195], [978.5, 1129.5], [1002.5, 1129.5], [1002.5, 1067], [978.5, 1067], [978.5, 1002], [1002.5, 1002]];
const LID = [[736, 978], [825, 978], [825, 1002], [888, 1002], [888, 978], [976.5, 978], [976.5, 1043], [953, 1043], [953, 1105.5], [976.5, 1105.5], [976.5, 1171], [953, 1171], [953, 1233.5], [976.5, 1233.5], [976.5, 1298], [888, 1298], [888, 1274.5], [825, 1274.5], [825, 1298], [736, 1298], [736, 1233.5], [759.5, 1233.5], [759.5, 1171], [736, 1171], [736, 1105.5], [759.5, 1105.5], [759.5, 1043], [736, 1043]];
const FACE = [[1221, 922], [1285, 922], [1285, 898], [1350, 898], [1350, 922], [1412, 922], [1412, 898], [1477.5, 898], [1477.5, 922], [1541.5, 922], [1541.5, 1003.5], [1517.5, 1003.5], [1517.5, 1066], [1541.5, 1066], [1541.5, 1131], [1517.5, 1131], [1517.5, 1193.5], [1541.5, 1193.5], [1541.5, 1274.5], [1477.5, 1274.5], [1477.5, 1298], [1412, 1298], [1412, 1274.5], [1350, 1274.5], [1350, 1298], [1285, 1298], [1285, 1274.5], [1221, 1274.5], [1221, 1193.5], [1245, 1193.5], [1245, 1131], [1221, 1131], [1221, 1066], [1245, 1066], [1245, 1003.5], [1221, 1003.5]];
const shift = (pts, dx) => pts.map(([x, y]) => [x + dx, y]);
const TEE = [[2209.5, 1079.5], [2248, 1079.5], [2248, 1139], [2287.5, 1139], [2287.5, 1217.5], [2169.5, 1217.5], [2169.5, 1139], [2209.5, 1139]];
const VIEWS = [
  { name: 'bottom_contour', x1: 597.5, x2: 1115, top: 972.5, pts: LID },
  { name: 'left_contour', x1: 903, x2: 1294.5, top: 892.5, pts: SIDE },
  { name: 'back_contour', x1: 1162, x2: 1600.5, top: 892.5, pts: FACE },
  { name: 'front_heart_contour', x1: 1382.5, x2: 2025, top: 892.5, pts: shift(FACE, 322.8), extra: <path d="M1703.700 1043A35 35 0 1 0 1648 1083.600L1703.700 1137L1759.500 1083.600A35 35 0 1 0 1703.700 1043Z" />, dots: [[1703.7, 1043], [1648, 1083.6], [1703.7, 1137], [1759.5, 1083.6]] },
  { name: 'top_circle_contour', x1: 1688.5, x2: 2283.5, top: 972.5, pts: shift(LID, 1129.8), extra: <circle cx="1986.200" cy="1178.300" r="41" />, dots: [[1986.2, 1137.3]] },
  { name: 'right_rect_contour', x1: 1931.5, x2: 2526, top: 892.5, pts: shift(SIDE, 1130), extra: <polygon points={TEE.join(' ')} />, dots: TEE, c: '#ffff1a' },
];

const DrawingSvg = () => (
  <svg width="1930" height="576" viewBox="601 831 1930 576">
    <rect x="735" y="897" width="1618" height="404" fill="#fff" stroke="#000" strokeWidth="2" />
    {VIEWS.map(v => (
      <g key={v.name}>
        <g fill="#fff" stroke="#000" strokeWidth="1.800"><polygon points={v.pts.join(' ')} />{v.extra}</g>
        {[...v.pts, ...(v.dots || [])].map(([x, y], i) => <circle key={i} cx={x} cy={y} r="2.700" fill="#969390" />)}
        <path d={`M${v.x1} ${v.top}H${v.x2}V1369.500H${v.x1}Z`} fill="none" stroke={v.c || '#000'} strokeWidth="1" strokeDasharray="4 2" />
        <text x={(v.x1 + v.x2) / 2} y="1366" textAnchor="middle" fontSize="64" fill={v.c || '#000'}>{v.name}</text>
      </g>
    ))}
  </svg>
);

const BOX_EDGES = [
  'M378 418L615 247L931 475L693 647Z', 'M378 418V991L693 1220L931 1048V475', 'M693 647V1220',
  'M378 453L442 498V464L464 447L529 493L505 511V545L569 591V556L591 539L655 585L631 602V636L693 681L780 620V583L757 568L820 522L845 540V572L931 511',
  'M467 356L489 373L552 327L529 311', 'M678 294L654 311L718 355L741 340', 'M803 386L780 402L845 447L866 432',
  'M378 570L403 584V677L378 660M378 753L403 768V860L378 843',
  'M378 958L442 1003V1037M505 1084V1048L569 1095V1130M631 1174V1140L693 1185L780 1123V1158M845 1110V1077L931 1017',
  'M718 665V780L693 796L671 780V872L693 887L718 872V964L693 979L671 963V1055L693 1070L718 1054V1167',
  'M907 527V642L931 627M931 716L907 733V825L931 809M931 900L907 916V1030',
  'M754 718L871 634V748L831 775V863L792 891V804L754 833Z', 'M848 651V732L871 748M848 732L809 759L831 775M809 759V847L831 863M809 847L792 859M754 797L769 788L792 804',
];
const BoxScene = () => (
  <SceneSvg viewBox="13 102 1512 1426" preserveAspectRatio="none">
    <defs>
      <linearGradient id="hole"><stop offset="0" stopColor="#555" /><stop offset="0.500" stopColor="#b4b4b4" /><stop offset="1" stopColor="#5a5a5a" /></linearGradient>
      <linearGradient id="lobe" x1="0" y1="0" x2="0" y2="1"><stop offset="0" stopColor="#333" /><stop offset="0.600" stopColor="#a5a5a5" /><stop offset="1" stopColor="#b4b4b4" /></linearGradient>
    </defs>
    <path d="M615 247L931 475V1048L693 1220L378 991V418Z" fill="#808080" />
    <ellipse cx="615" cy="418" rx="57" ry="41" fill="url(#hole)" />
    <path d="M566 434Q585 412 615 412Q646 412 665 434Q650 459 615 459Q580 459 566 434Z" fill="#808080" />
    <path d="M487 680Q470 690 470 715Q471 740 482 760L505 743Q490 710 495 683Z" fill="url(#lobe)" />
    <path d="M482 760L505 743L558 859L537 876Z" fill="#b4b4b4" />
    <g fill="none" stroke="#141414" strokeWidth="1.700">
      {BOX_EDGES.map(d => <path key={d} d={d} vectorEffect="non-scaling-stroke" />)}
      <ellipse cx="615" cy="418" rx="57" ry="41" vectorEffect="non-scaling-stroke" />
      <path d="M566 434Q585 412 615 412Q646 412 665 434M615 412V459" vectorEffect="non-scaling-stroke" />
      <path d="M537 738Q520 690 492 681Q470 680 470 715Q471 740 482 760L537 876L597 838Q608 820 602 790Q592 745 566 731Q548 724 537 738ZM482 760L505 743L558 859M505 743Q488 705 494 684" vectorEffect="non-scaling-stroke" />
    </g>
    <path d="M378 734L371 769H384Z" fill="#1c1c8c" stroke="#1c1c8c" strokeWidth="2" /><path d="M531 1098L559 1122L530 1110Z" fill="#8c1c1c" stroke="#8c1c1c" strokeWidth="3" />
  </SceneSvg>
);
const NavCube = () => (
  <SceneSvg viewBox="597 213 800 599" fontSize="9">
    <g fill="#a3a3bd" opacity="0.850">
      <path d="M1324.300 220L1336 232H1313ZM1324.300 352L1336 340H1313ZM1259 285.700L1270.500 274.500V297ZM1390 285.700L1378.500 274.500V297Z" />
      <path d="M1306 227L1308 234Q1293 239 1286 250L1288 252L1276 255L1275 242L1279 244Q1289 231 1306 227Z" />
      <path d="M1342.600 227L1340.600 234Q1355.600 239 1362.600 250L1360.600 252L1373 255L1374 242L1369.600 244Q1360 231 1342.600 227Z" />
    </g>
    <path d="M1324.300 250L1352 257.500L1362 271L1361 292L1352 307L1334 326.500H1315L1296 307L1288 292L1287 271L1297 257.500Z" fill="#8f92b3" stroke="#b9bbd0" strokeWidth="1" />
    <path d="M1320 252H1329L1354 260L1334 277L1324.300 273L1315 277L1295 260Z" fill="#cbcddb" />
    <path d="M1289 267L1313 281L1313 289L1319 294V325H1315L1297 307Q1286 288 1289 267Z" fill="#cbcddb" />
    <path d="M1360 267L1336 281L1336 289L1330 294V325H1334L1352 307Q1363 288 1360 267Z" fill="#cbcddb" />
    <path d="M1324.300 253V280M1311 293L1318 289M1346 299L1331 290" stroke="#8f92b3" strokeWidth="1.500" />
    <circle cx="1324.300" cy="286" r="8" fill="#d2d4e0" stroke="#b4b6cb" />
    <path d="M1319 261H1329M1322 263.500H1329M1297 292L1308 303M1300 297L1310 300M1340 304L1351 292M1341 299L1350 297" stroke="#111" strokeWidth="2" strokeDasharray="3 1.500" />
    <path d="M1280 274.500L1288 306" stroke="#1010f0" strokeWidth="2" /><path d="M1289 307L1311.600 329" stroke="#f01010" strokeWidth="2" /><path d="M1289 306L1315 291" stroke="#60f060" strokeWidth="2" />
    <text x="1278" y="259" fill="#1010f0">Z</text><text x="1326.500" y="341" fill="#f01010">X</text><text x="1327" y="285" fill="#90e090">Y</text>
    <path d="M1357 327L1367 331V343L1357 348L1347 343V331Z" fill="#a9a9c4" /><path d="M1347 331L1357 335L1367 331M1357 335V348" stroke="#7c7c9c" fill="none" />
    <path d="M1372 334H1383L1377.500 340Z" fill="#45455f" />
    <path d="M1367 783V763" stroke="#1c1c8c" strokeWidth="2.500" /><path d="M1367 783L1380 775" stroke="#1c7c1c" strokeWidth="2.500" /><path d="M1367 783L1385 793" stroke="#8c1c1c" strokeWidth="2.500" />
    <text x="1369.500" y="763">Z</text><text x="1381" y="776">Y</text><text x="1386.500" y="794">X</text>
  </SceneSvg>
);

const Tool = ({ icons }) => icons.map((I, i) => {
  if (I === '|') return <ToolSep key={i} />;
  if (I === ':') return <ToolGrip key={i} />;
  if (I === 'v') return <DropButton key={i}><Caret /></DropButton>;
  if (I === 'w') return <DropButton key={i}><Caret c="#c8c8c8" /></DropButton>;
  if (typeof I === 'string') return <ToolButton key={i}><CubeIcon face={I} /></ToolButton>;
  return <ToolButton key={i}><I /></ToolButton>;
});

export default function App() {
  return (
    <Shell>
      <GlobalStyle />
      <TitleBar>
        <TitleText>FreeCAD 0.19</TitleText>
        <TitleButtons><SysBtn kind="min" /><SysBtn kind="max" /><SysBtn kind="close" /></TitleButtons>
      </TitleBar>
      <Frame>
        <Content>
          <MenuBar>{MENUS.map(m => <MenuItem key={m} $mnemonic={m !== 'LCInterlocking'}>{m}</MenuItem>)}</MenuBar>
          <ToolRow $h={56} $top={2}>
            <ToolGrip $w={16} />
            <Tool icons={[NewIcon, OpenIcon, SaveIcon, PrintIcon, '|', CutIcon, CopyIcon, PasteIcon, '|', UndoIcon, 'v', RedoIcon, 'w', '|', RefreshIcon, '|', HelpIcon, ':']} />
            <Combo><LaserIcon /><ComboText>Laser Cut Interlocking</ComboText><Caret /></Combo>
            <Tool icons={[':', RecordIcon, StopIcon, EditIcon, PlayIcon]} />
          </ToolRow>
          <ToolRow $h={52} $top={4}>
            <ToolGrip $w={16} />
            <Tool icons={[FitAllIcon, FitSelIcon, DrawStyleIcon, 'v', BoundIcon, '|', BackIcon, FwdIcon, ViewLinkIcon, 'v', '|']} />
            <ToolButton $active><SyncIcon /></ToolButton><DropButton $active><Caret /></DropButton>
            <Tool icons={[IsoIcon, '|', 'front', 'top', 'right', '|', 'back', 'bottom', 'left', '|', RulerIcon, ':', PartIcon, GroupIcon, LinkIcon, LinksIcon, 'v', ':', BeamIcon, TabIcon, SlotIcon, ':', HexIcon, BendIcon, ':', CrossIcon, ExportIcon]} />
          </ToolRow>
          <Main>
            <Dock>
              <DockTitle><DockName>Combo View</DockName><DockFloat /><DockClose /></DockTitle>
              <TabsTop><TopTab $on>Model</TopTab><TopTab>Tasks</TopTab></TabsTop>
              <Pane>
                <TreeFrame>
                  <HeaderRow $h={28}>
                    <HeaderCell $w={340} $pad={2}>Labels &amp; Attributes</HeaderCell>
                    <HeaderCell $w={150} $pad={2} $last>Description</HeaderCell>
                  </HeaderRow>
                  <AppRow>Application</AppRow>
                  {TREE.map(([level, arrow, I, label, o]) => (
                    <TreeRow key={label} $level={level} $dim={o.dim} $sel={o.sel} $bold={o.bold}>
                      <Expander>{arrow && <Caret d={arrow} />}</Expander>
                      {I === 'exp' ? <Export s={24} c={o.sel ? '#336a90' : '#6c6c6c'} bg={o.sel ? '#3f83ae' : '#f2f2f2'} /> : <I dim={o.dim} />}
                      <TreeLabel $sel={o.sel}>{label}</TreeLabel>
                    </TreeRow>
                  ))}
                </TreeFrame>
                <DotBar>{[0, 1, 2, 3, 4, 5].map(i => <Dot key={i} />)}</DotBar>
                <PropOuter>
                  <PropInner>
                    <HeaderRow $h={28}>
                      <HeaderCell $w={149} $pad={3}>Property</HeaderCell>
                      <HeaderCell $grow $pad={3} $last>Value</HeaderCell>
                    </HeaderRow>
                    {PROPS.map(p => (p.group
                      ? <PropRow key={p.group} $group><PropGutter /><PropName $wide>{p.group}</PropName></PropRow>
                      : <PropRow key={p.name} $alt={p.alt}>
                          <PropGutter $sel={p.sel}>{p.arrow && <Caret d="right" />}</PropGutter>
                          <PropName $sel={p.sel}>{p.name}</PropName><PropValue>{p.value}</PropValue>
                        </PropRow>))}
                  </PropInner>
                </PropOuter>
                <TabsBottom><BottomTab>View</BottomTab><BottomTab $on>Data</BottomTab></TabsBottom>
              </Pane>
            </Dock>
            <Splitter>{[0, 1, 2, 3, 4, 5].map(i => <Dot key={i} />)}</Splitter>
            <Center>
              <MdiArea>
                <DrawWindow>
                  <DrawTitle>
                    <WinName $shift={41} $drop={3}>LasercutterTechdraw</WinName>
                    <WinButtons><WinButton $min /><WinButton /><WinButton /></WinButtons>
                  </DrawTitle>
                  <DrawBody>
                    <Canvas><DrawingSvg /></Canvas>
                    <VScroll>
                      <ScrollArrow $edge="0 0 2px 0"><Caret d="up" s={13} /></ScrollArrow><ScrollGap $v $s={148} /><ScrollThumb $v $s={259} /><ScrollGap $v $s={129} /><ScrollArrow $edge="2px 0 0 0"><Caret s={13} /></ScrollArrow>
                    </VScroll>
                    <HScroll>
                      <ScrollArrow $edge="0 2px 0 0"><Caret d="left" s={13} /></ScrollArrow><ScrollGap $s={576} /><ScrollThumb $s={755} /><ScrollGap $s={559} /><ScrollArrow $edge="0 0 0 2px"><Caret d="right" s={13} /></ScrollArrow>
                    </HScroll>
                    <Corner />
                  </DrawBody>
                </DrawWindow>
                <BoxWindow>
                  <BoxTitle>
                    <FcIcon />
                    <WinName $shift={6}>box_with_heart : 1*</WinName>
                    <WinButtons><WinButton $blue $min /><WinButton $blue /><WinButton $blue /></WinButtons>
                  </BoxTitle>
                  <BoxBody><Viewport><BoxScene /><NavCube /></Viewport></BoxBody>
                </BoxWindow>
              </MdiArea>
              <DocTabs>
                <DocTab $on $w={280}><FcIcon /><DocName $pad={7}>box_with_heart : 1*</DocName><CloseX /></DocTab>
                <DocTab $w={298}><PageIcon /><DocName $pad={9}>LasercutterTechdraw</DocName><CloseX /></DocTab>
              </DocTabs>
            </Center>
          </Main>
          <StatusBar>
            <StatusText>Valid, Internal name: LasercutterTechdrawExport003</StatusText>
            <StatusRight>
              <svg width="15" height="20" viewBox="0 0 15 20"><rect x="1.200" y="1.200" width="12.600" height="17.600" rx="5" fill="#fff" stroke="#2b3236" strokeWidth="2.200" /><path d="M1 10Q5 10 5 6V2M14 10Q10 10 10 6V2" fill="none" stroke="#2b3236" strokeWidth="1.500" /><rect x="6.500" y="4" width="2" height="5" fill="#2b3236" /></svg>
              <NavStyle>Blender</NavStyle><Dash>-</Dash><span>135,49 mm x 101,62 mm</span>
            </StatusRight>
            <SizeGrip width="22" height="22" viewBox="0 0 22 22" fill="#bbb"><path d="M18 0h2v2h-2zM18 6h2v2h-2zM12 6h2v2h-2zM18 12h2v2h-2zM12 12h2v2h-2zM6 12h2v2H6zM18 18h2v2h-2zM12 18h2v2h-2zM6 18h2v2H6zM0 18h2v2H0z" /></SizeGrip>
          </StatusBar>
        </Content>
        <EdgeStrip><EdgeBlock $h={154} $c="#dedede" /><EdgeBlock $h={73} $c="#164a70" /></EdgeStrip>
      </Frame>
    </Shell>
  );
}
